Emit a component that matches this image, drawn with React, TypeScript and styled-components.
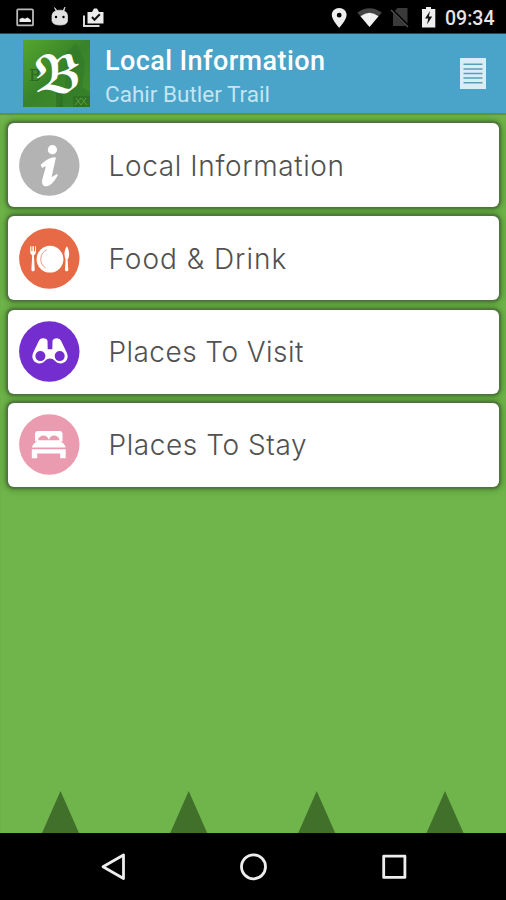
import React from "react";
import styled, { createGlobalStyle } from "styled-components";

const GlobalStyle = createGlobalStyle`
  body { margin: 0; background: #000; }
  * { box-sizing: border-box; }
  svg { display: block; flex: none; }
`;

const Screen = styled.div`
  width: 506px;
  height: 900px;
  display: flex;
  flex-direction: column;
  overflow: hidden;
  font-family: Roboto, sans-serif;
`;

const StatusBar = styled.div`
  height: 34px;
  flex: none;
  display: flex;
  justify-content: space-between;
  background: #000;
  border-bottom: 1px solid #25485a;
`;

const Clock = styled.text`
  font: 500 19.5px Roboto, sans-serif;
  fill: #e4e4e4;
`;

const Header = styled.header`
  height: 79px;
  flex: none;
  display: flex;
  align-items: center;
  padding: 0 20px 0 23px;
  background: #4aa3c9;
`;

const Titles = styled.div`
  flex: 1;
  margin-left: 15px;
  padding-top: 7px;
  white-space: nowrap;
`;

const Title = styled.h1`
  margin: 0;
  font-size: 27px;
  line-height: 34px;
  font-weight: 500;
  letter-spacing: 0.4px;
  color: #fff;
`;

const Subtitle = styled.div`
  font-size: 22.5px;
  line-height: 33px;
  color: #c4e5f2;
`;

const Content = styled.main`
  flex: 1;
  display: flex;
  flex-direction: column;
  justify-content: space-between;
  background: #70b54b;
  box-shadow: inset 0 2px 1px #579832;
`;

const List = styled.nav`
  display: flex;
  flex-direction: column;
  gap: 9.3px;
  padding: 10px 7px 0 8px;
`;

const Card = styled.div`
  height: 84px;
  display: flex;
  align-items: center;
  padding-left: 11px;
  background: #fff;
  border-radius: 6px;
  box-shadow: 0 0 2px 2px #50723f, 0 0 7px 3px #4b8b2e;
`;

const Label = styled.span<{ $spacing: number }>`
  margin-left: 28.5px;
  padding-top: 1px;
  font-family: Inter, sans-serif;
  font-weight: 300;
  font-size: 28px;
  letter-spacing: ${(p) => p.$spacing}px;
  color: #515151;
  white-space: nowrap;
`;

const NavBar = styled.div`
  height: 67px;
  flex: none;
  background: #000;
`;

const LogoLetter = styled.text<{ $faint?: boolean }>`
  font-family: "DejaVu Math TeX Gyre", "DejaVu Sans", "Liberation Serif", serif;
  font-size: ${(p) => (p.$faint ? 16 : 54)}px;
  fill: ${(p) => (p.$faint ? "#2c6820" : "#fff")};
`;

const Disc = ({ color, children }: { color: string; children: React.ReactNode }) => (
  <svg width="61" height="61" viewBox="0 0 61 61">
    <circle cx="30.3" cy="30.5" r="30.2" fill={color} />
    {children}
  </svg>
);

const Info = () => (
  <Disc color="#b3b3b3">
    <circle cx="33.4" cy="14.7" r="4.6" fill="#fff" />
    <path d="M22.5 30 Q30 23 36 23 L32 41 Q31 45 38 40 Q32 51 26 50.5 Q22.5 49.5 24.5 43 L28 30.5 Q26 30 23.5 32Z" fill="#fff" stroke="#fff" strokeWidth="1.6" strokeLinejoin="round" />
  </Disc>
);

const Food = () => (
  <Disc color="#e56a45">
    <circle cx="31" cy="31.2" r="13.4" fill="#fff" />
    <path d="M27.8 21.7 A10.5 10.5 0 0 0 26.6 40" fill="none" stroke="#e99a82" strokeWidth="1" />
    <path d="M11.2 18.2v5.5c0 2 .9 3.1 2 3.5l-.8 14.2c0 2.6 3.3 2.6 3.3 0l-.8-14.2c1.2-.4 2-1.5 2-3.5v-5.5h-.9v5h-1v-5h-1.6v5h-1v-5z" fill="#fff" />
    <path d="M47.8 18.2c2.7 3.2 3.2 10.1.8 13.4l.7 9.8c0 2.5-3.3 2.5-3.3 0l.6-10c-2-4-1.3-9.7 1.2-13.2z" fill="#fff" />
  </Disc>
);

const Visit = () => (
  <Disc color="#742dcf">
    <path d="M20 19.5 Q21 17.2 24.2 17.2 Q28.1 17.2 28.5 20 L28.7 28.3 H33.3 L33.5 20 Q34 17.2 38 17.2 Q41.2 17.2 42 19.7 L47.8 31.8 C51 39 44.6 44 39 42 C36 40.8 34.8 37.5 31 37.5 S26 40.8 23 42 C17.4 44 11 39 14.2 31.8Z" fill="#fff" />
    <circle cx="21.4" cy="35.1" r="5" fill="#742dcf" />
    <circle cx="40.7" cy="35.1" r="5" fill="#742dcf" />
  </Disc>
);

const Bed = () => (
  <Disc color="#eb9baf">
    <path d="M16 27.5V20Q16 17 19 17H40.5Q43.5 17 43.5 20V27.5Z" fill="#fff" />
    <path d="M19 26.2C20 20.5 28 20 29.4 25.2H30.2C31.6 20 39.6 20.5 40.6 26.2H39.4C37.4 24.2 33.2 24.2 31.4 26.2H28.2C26.4 24.2 22.2 24.2 20.2 26.2Z" fill="#eb9baf" />
    <path d="M20.2 26.2C21.6 22.2 27.2 22.2 28.6 26.2ZM31 26.2C32.4 22.2 38 22.2 39.4 26.2Z" fill="#eb9baf" />
    <path d="M18.8 27H40.7Q45.2 29 46.7 33.4H12.8Q14.4 29 18.8 27ZM12.8 35.2H46.7V44.3H41.2V39.5H18.2V44.3H12.8Z" fill="#fff" />
  </Disc>
);

const items = [
  { label: "Local Information", icon: <Info />, spacing: 0.62 },
  { label: "Food & Drink", icon: <Food />, spacing: 0.98 },
  { label: "Places To Visit", icon: <Visit />, spacing: 0.45 },
  { label: "Places To Stay", icon: <Bed />, spacing: 0.58 },
];

const Logo = () => (
  <svg width="67" height="67" viewBox="0 0 67 67">
    <defs>
      <linearGradient id="grass" x1="0" y1="0" x2="1" y2="1">
        <stop offset="0" stopColor="#55a52e" />
        <stop offset=".5" stopColor="#388329" />
        <stop offset="1" stopColor="#438e2b" />
      </linearGradient>
    </defs>
    <path d="M0 0H67V67H0z" fill="url(#grass)" />
    <path d="M43 12 53 3 62 22 59 47 67 52V67H35L42 46Z" fill="#2d7529" opacity=".5" />
    <path d="M33 53h7v14h-7zM50 56h17v11H50z" fill="#28651f" opacity=".5" />
    <path d="m53 58 5 7 5-7M52 65l6-7 6 7" fill="none" stroke="#5e9b3b" />
    <LogoLetter $faint x="6" y="41">B</LogoLetter>
    <LogoLetter transform="translate(9.5 51.5) scale(.77 .89)">𝕭</LogoLetter>
  </svg>
);

export default function App() {
  return (
    <Screen>
      <GlobalStyle />
      <StatusBar>
        <svg width="110" height="33" viewBox="0 0 110 33">
          <rect x="17.2" y="9.4" width="15.8" height="16" rx="1" fill="none" stroke="#b9b9b9" strokeWidth="1.8" />
          <path d="m19.5 22 0-3 3-1.3 2.2 1 3-1.2 3.2 2.5v2z" fill="#eee" />
          <path d="M52 15.5Q52.5 11.5 56 11L54.5 7.5 57 10.5Q60 9.8 63 10.5L65 7 64 11.2Q67.5 12 67.5 16V21Q67 25 60 25 T52 21Z" fill="#e2e2e2" stroke="#e2e2e2" strokeWidth=".7" />
          <circle cx="56" cy="17" r="1.2" />
          <circle cx="63.5" cy="17" r="1.2" />
          <path d="M84 15.5V26H99.5" fill="none" stroke="#dadada" strokeWidth="2" />
          <path d="M87.5 12H92l2-3.5h3L99 12h4.5V23.5H87.5Z" fill="#ececec" />
          <path d="m92 17 2.5 2.8 5.3-5.5" fill="none" stroke="#111" strokeWidth="2" />
        </svg>
        <svg width="190" height="33" viewBox="316 0 190 33">
          <path d="M339.2 8C335 8 331.8 11 331.8 15 331.8 20 339.2 27.8 339.2 27.8S346.6 20 346.6 15C346.6 11 343.4 8 339.2 8Zm0 4.8a2.4 2.4 0 1 1 0 4.8 2.4 2.4 0 0 1 0-4.8Z" fill="#eee" fillRule="evenodd" />
          <path d="M357.3 12.5Q369.5 3.8 381.8 12.5L369.5 27Z" fill="#454545" />
          <path d="M360.5 16.2Q369.5 9.2 378.5 16.2L369.5 27Z" fill="#f2f2f2" />
          <path d="M397.5 8H407.5V26H393V13Z" fill="#3a3a3a" />
          <path d="m391.5 9.5 17 17" stroke="#000" strokeWidth="3" />
          <path d="m391 10 17 17" stroke="#535353" strokeWidth="1.3" />
          <path d="M422 9H426V7H431V9H435.3V27.4H422Z" fill="#eee" />
          <path d="m430 11-5 7.6h3.2l-1.2 5.8 5.2-8h-3.4z" fill="#111" />
          <Clock x="445" y="25">09:34</Clock>
        </svg>
      </StatusBar>
      <Header>
        <Logo />
        <Titles>
          <Title>Local Information</Title>
          <Subtitle>Cahir Butler Trail</Subtitle>
        </Titles>
        <svg width="26" height="31" viewBox="0 0 26 31">
          <path d="M0 0H26V31H0Z" fill="#d8eef6" />
          <path d="M3.5 6.3H22.5M3.5 11H22.5M3.5 15.5H22.5M3.5 20H22.5M3.5 24.8H22.5" stroke="#5b9dba" strokeWidth="1.6" />
        </svg>
      </Header>
      <Content>
        <List>
          {items.map((item) => (
            <Card key={item.label}>
              {item.icon}
              <Label $spacing={item.spacing}>{item.label}</Label>
            </Card>
          ))}
        </List>
        <svg width="506" height="43" viewBox="0 0 506 43">
          <path d="M60.5 1 79 43H42ZM188.7 1 207.2 43H170.2ZM316.7 1 335.2 43H298.2ZM445 1 463.5 43H426.5Z" fill="#41702b" />
        </svg>
      </Content>
      <NavBar>
        <svg width="506" height="67" viewBox="0 833 506 67" fill="none" stroke="#eee" strokeWidth="2.8" strokeLinejoin="round">
          <path d="M123.5 855V878.5L103 866.8Z" />
          <circle cx="253.5" cy="866.8" r="12" />
          <rect x="383.7" y="856.2" width="21.2" height="21.2" />
        </svg>
      </NavBar>
    </Screen>
  );
}
